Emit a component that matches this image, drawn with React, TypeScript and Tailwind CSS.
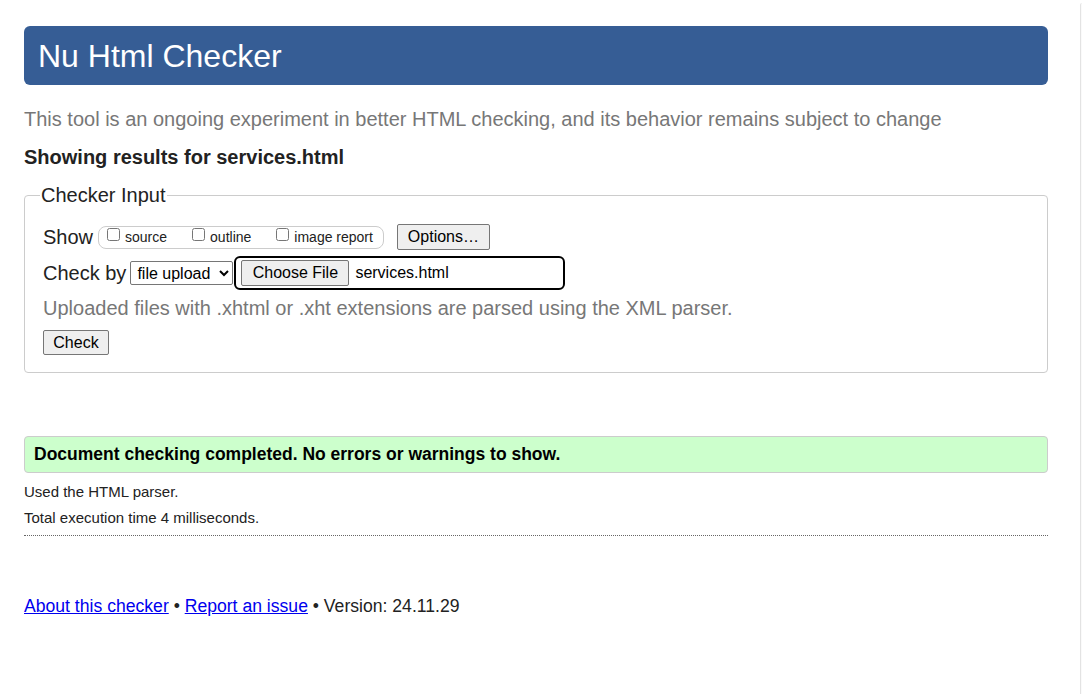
import { useState } from "react";

function Btn({ children, className = "" }: { children: React.ReactNode; className?: string }) {
  return (
    <button
      className={
        "bg-[#efefef] border border-[#767676] rounded-[2px] text-black leading-none " + className
      }
    >
      {children}
    </button>
  );
}

function Opt({ label }: { label: string }) {
  const [on, setOn] = useState(false);
  return (
    <label className="flex items-center gap-[5px] text-[14px] text-[#222]">
      <input
        type="checkbox"
        checked={on}
        onChange={() => setOn(!on)}
        className="w-[13px] h-[13px] -mt-[5px]"
      />
      {label}
    </label>
  );
}

export default function App() {
  return (
    <div
      className="flex w-full min-h-[694px] bg-white text-[#222]"
      style={{ fontFamily: '"Liberation Sans", Arial, sans-serif' }}
    >
      <div className="flex-1 pl-[24px] pr-[32px] pt-[26px]">
        {/* Title */}
        <h1 className="flex items-center h-[59px] px-[14px] bg-[#365d95] text-white text-[32px] rounded-[6px]">
          Nu Html Checker
        </h1>

        <p className="mt-[22px] text-[20px] text-[#777] leading-[24px]">
          This tool is an ongoing experiment in better HTML checking, and its behavior remains subject to change
        </p>
        <p className="mt-[15px] text-[20px] font-bold leading-[23px]">Showing results for services.html</p>

        {/* Checker input */}
        <fieldset className="mt-[15px] border border-[#ccc] rounded-[4px] pl-[18px] pb-[17px]">
          <legend className="ml-[-3px] px-[1px] text-[20px] leading-[23px] text-[#222]">Checker Input</legend>

          <div className="flex items-center mt-[16px] h-[28px]">
            <span className="text-[20px]">Show</span>
            <div className="ml-[5px] flex items-center gap-[25px] h-[23px] pl-[8px] pr-[10px] border border-[#ccc] rounded-[8px]">
              <Opt label="source" />
              <Opt label="outline" />
              <Opt label="image report" />
            </div>
            <Btn className="ml-[13px] h-[26px] w-[93px] text-[16px]">Options…</Btn>
          </div>

          <div className="flex items-center mt-[5px] h-[34px]">
            <span className="text-[20px]">Check by</span>
            <select className="ml-[4px] h-[24px] w-[103px] border border-[#767676] rounded-[2px] text-[16px] text-black px-[2px] bg-white">
              <option>file upload</option>
            </select>
            <div className="ml-[1px] flex items-center h-[34px] w-[331px] border-2 border-black rounded-[6px] pl-[5px]">
              <Btn className="h-[26px] w-[108px] text-[16px]">Choose File</Btn>
              <span className="ml-[6px] text-[16px] text-black">services.html</span>
            </div>
          </div>

          <p className="mt-[6px] text-[20px] text-[#777] leading-[24px]">
            Uploaded files with .xhtml or .xht extensions are parsed using the XML parser.
          </p>

          <Btn className="mt-[10px] h-[25px] w-[66px] text-[16px]">Check</Btn>
        </fieldset>

        {/* Result */}
        <div className="mt-[63px] h-[37px] flex items-center px-[9px] bg-[#ccffcc] border border-[#ccc] rounded-[4px]">
          <span className="text-[17.5px] font-bold text-black">
            Document checking completed. No errors or warnings to show.
          </span>
        </div>

        <p className="mt-[10px] text-[15px] leading-[17px]">Used the HTML parser.</p>
        <p className="mt-[9px] text-[15px] leading-[17px]">Total execution time 4 milliseconds.</p>
        <hr className="mt-[9px] border-0 border-t border-dotted border-[#666]" />

        <p className="mt-[59px] text-[17.6px] leading-[22px]">
          <a href="#" className="text-[#0000ee] underline">About this checker</a>
          {" • "}
          <a href="#" className="text-[#0000ee] underline">Report an issue</a>
          {" • Version: 24.11.29"}
        </p>
      </div>
      <div className="w-[2px] mt-[3px] border-l border-[#e3e3e3] rounded-tl-[3px] bg-[#fafafa]" />
    </div>
  );
}
